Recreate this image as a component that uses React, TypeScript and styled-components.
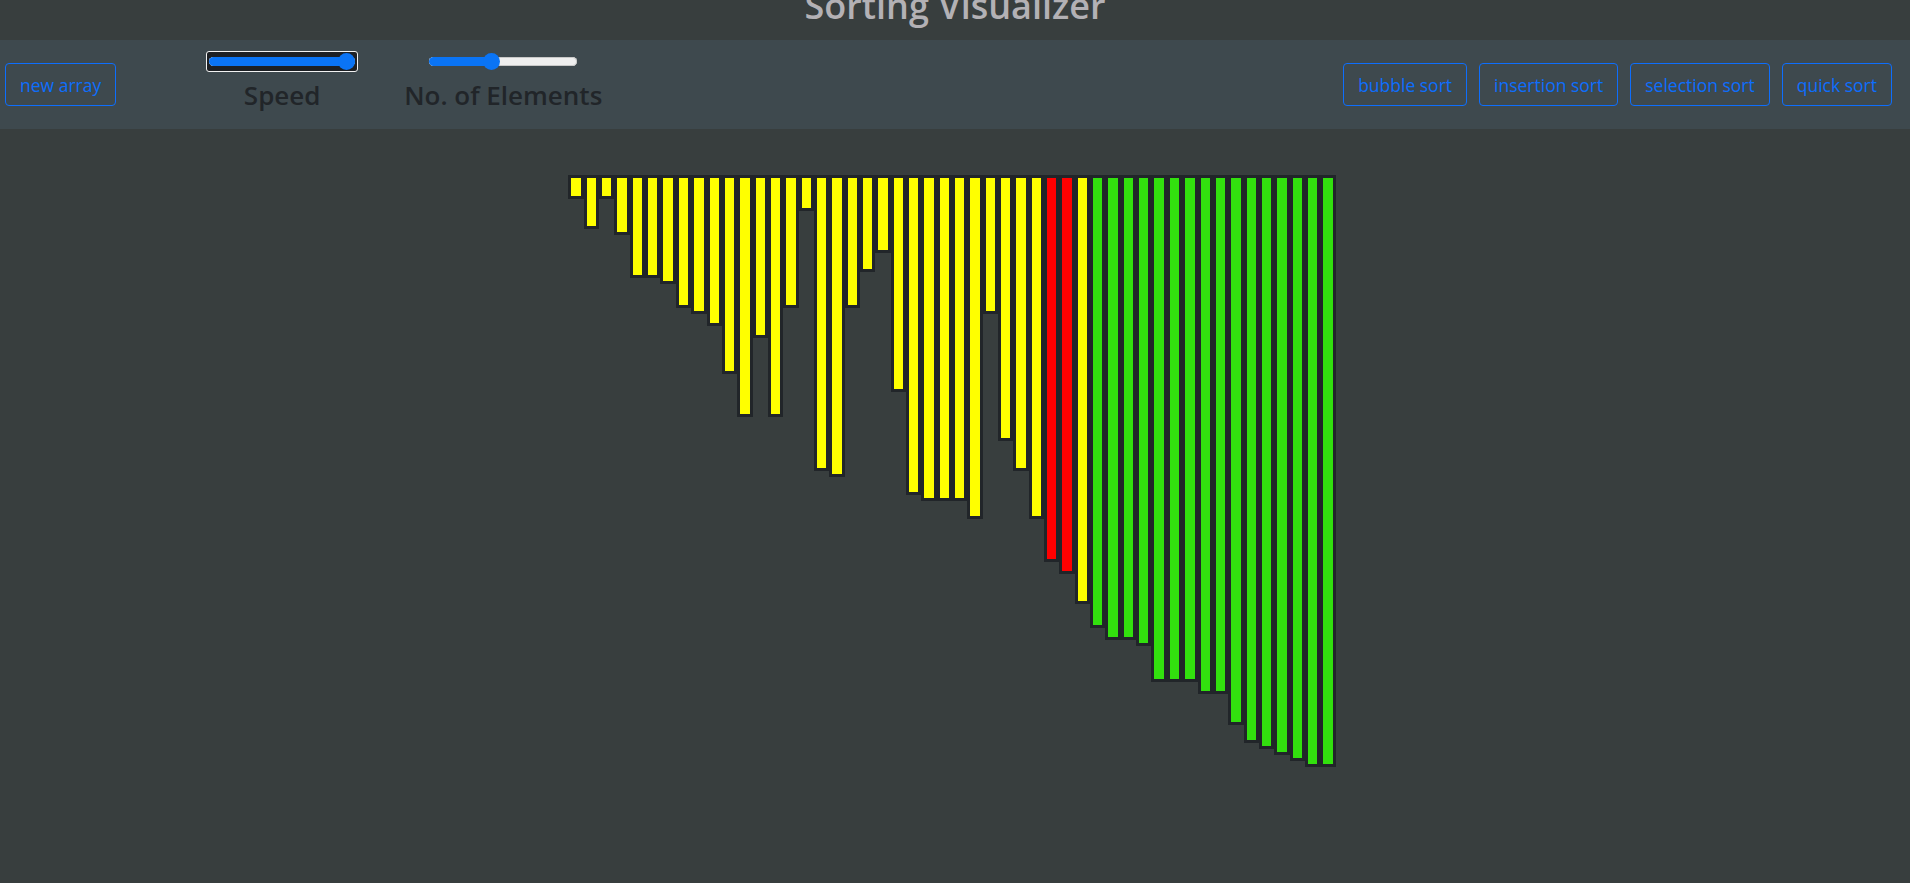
import React from 'react';
import styled, { createGlobalStyle } from 'styled-components';

const GlobalStyle = createGlobalStyle`
    html, body {
        margin: 0;
        padding: 0;
        background: #383e3e;
    }
    body {
        font-family: "Open Sans", "Noto Sans", "Liberation Sans", sans-serif;
        overflow: hidden;
    }
`;

const Page = styled.div`
    width: 1910px;
    height: 883px;
    background: #383e3e;
`;

const Header = styled.div`
    height: 40px;
    overflow: hidden;
    display: flex;
    justify-content: center;
`;

const Title = styled.h1`
    margin: -21px 0 0 0;
    font-size: 36px;
    line-height: 54px;
    font-weight: 600;
    color: #b3b1b5;
`;

const Toolbar = styled.div`
    height: 89px;
    background: #3e494e;
    display: flex;
    align-items: center;
    padding: 0 18px 0 5px;
`;

const Button = styled.button`
    height: 43px;
    padding: 0 14px;
    border: 1px solid #0d6efd;
    border-radius: 4px;
    background: transparent;
    color: #0d6efd;
    font-family: "Open Sans", "Noto Sans", sans-serif;
    font-size: 17.5px;
    cursor: pointer;
`;

const ControlGroup = styled.div<{ $offset: number }>`
    margin-left: ${(p) => p.$offset}px;
    display: flex;
    flex-direction: column;
    align-items: center;
    padding-bottom: 6px;
`;

const Label = styled.div`
    margin-top: 6px;
    font-size: 26px;
    line-height: 34px;
    font-weight: 600;
    color: #212529;
`;

const FocusBox = styled.div`
    width: 152px;
    height: 21px;
    box-sizing: border-box;
    border: 1px solid #f2f2f2;
    border-radius: 3px;
    background: #1d2024;
    display: flex;
    align-items: center;
    padding: 0 2px;
`;

const SliderTrack = styled.div<{ $width: number }>`
    position: relative;
    width: ${(p) => p.$width}px;
    height: 9px;
    border-radius: 5px;
    background: #efefef;
    box-shadow: inset 0 0 0 1px #c8c8c8;
`;

const SliderFill = styled.div`
    height: 100%;
    border-radius: 5px;
    background: #0a74f5;
`;

const Thumb = styled.div`
    position: absolute;
    top: 50%;
    width: 17px;
    height: 17px;
    margin: -8.5px 0 0 -8.5px;
    border-radius: 50%;
    background: #0a74f5;
`;

const PlainSlider = styled.div`
    height: 21px;
    display: flex;
    align-items: center;
`;

const SortButtons = styled.div`
    margin-left: auto;
    display: flex;
    gap: 12px;
`;

const Chart = styled.div`
    display: flex;
    align-items: flex-start;
    justify-content: center;
    margin-top: 46px;
    padding-right: 6px;
`;

const BAR_COLORS: Record<string, string> = {
    y: '#ffff00',
    r: '#ff0000',
    g: '#32e00e',
};

const Bar = styled.div<{ $state: string }>`
    box-sizing: border-box;
    width: 15.35px;
    flex: 0 0 15.35px;
    border: 3px solid #212529;
    background: ${(p) => BAR_COLORS[p.$state]};
`;

const HEIGHTS = [
    24, 54, 24, 60, 103, 103, 109, 133, 139, 151,
    199, 242, 163, 242, 133, 36, 296, 302, 133, 97,
    78, 217, 320, 326, 326, 326, 344, 139, 266, 296,
    344, 387, 399, 429, 453, 465, 465, 471, 507, 507,
    507, 519, 519, 550, 568, 574, 580, 586, 592, 592,
];

function barState(i: number) {
    if (i === 31 || i === 32) return 'r';
    if (i >= 34) return 'g';
    return 'y';
}

type SliderProps = {
    width: number;
    value: number;
};

function Slider({ width, value }: SliderProps) {
    const pos = value * width;
    return (
        <SliderTrack $width={width}>
            <SliderFill style={{ width: pos }} />
            <Thumb style={{ left: Math.min(Math.max(pos, 8.5), width - 8.5) }} />
        </SliderTrack>
    );
}

export default function App() {
    return (
        <Page>
            <GlobalStyle />
            <Header>
                <Title>Sorting Visualizer</Title>
            </Header>
            <Toolbar>
                <Button>new array</Button>
                <ControlGroup $offset={90}>
                    <FocusBox>
                        <Slider width={146} value={1} />
                    </FocusBox>
                    <Label>Speed</Label>
                </ControlGroup>
                <ControlGroup $offset={46}>
                    <PlainSlider>
                        <Slider width={148} value={0.42} />
                    </PlainSlider>
                    <Label>No. of Elements</Label>
                </ControlGroup>
                <SortButtons>
                    <Button>bubble sort</Button>
                    <Button>insertion sort</Button>
                    <Button>selection sort</Button>
                    <Button>quick sort</Button>
                </SortButtons>
            </Toolbar>
            <Chart>
                {HEIGHTS.map((h, i) => (
                    <Bar key={i} $state={barState(i)} style={{ height: h }} />
                ))}
            </Chart>
        </Page>
    );
}
